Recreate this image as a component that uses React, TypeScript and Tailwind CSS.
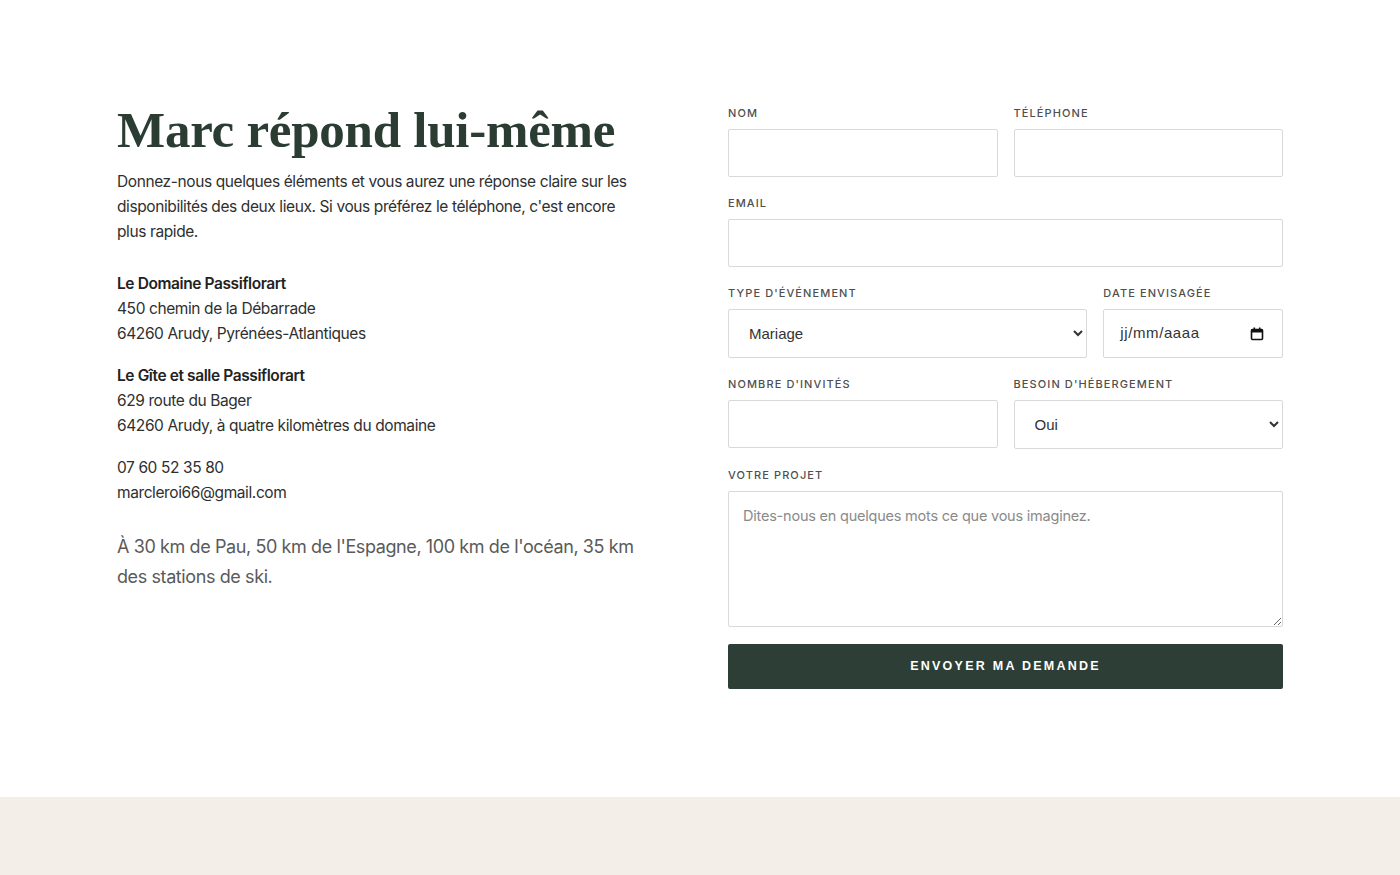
import React from 'react';

const sans = "font-['Inter','Noto_Sans',sans-serif]";
const arial = "font-['Liberation_Sans',Arial,sans-serif]";

const Label: React.FC<{ children: React.ReactNode }> = ({ children }) => (
  <label className="block text-[11px] leading-4 font-medium uppercase tracking-[0.1em] text-[#4f4f4f] mb-2">
    {children}
  </label>
);

const inputCls =
  'block w-full h-12 px-4 bg-white border border-[#d9d9d9] rounded-[2px] text-[15px] text-[#333] outline-none';

const CalendarIcon = () => (
  <svg width="14" height="14" viewBox="0 0 14 14" fill="none">
    <rect x="1.5" y="2.5" width="11" height="10" rx="1" stroke="#111" strokeWidth="1.6" />
    <rect x="1.5" y="2.5" width="11" height="3" fill="#111" />
    <rect x="3.5" y="0.5" width="1.6" height="3" fill="#111" />
    <rect x="8.9" y="0.5" width="1.6" height="3" fill="#111" />
  </svg>
);

const App: React.FC = () => {
  return (
    <div className={`min-h-screen bg-white ${sans}`}>
      <section className="pt-[100px] pb-[108px]">
        <div className="mx-auto w-[1166px] grid grid-cols-[525px_555px] gap-x-[86px]">
          {/* Left column */}
          <div className="tracking-[-0.025em]">
            <h2 className="font-['Liberation_Serif','DejaVu_Serif',serif] font-bold text-[51px] leading-[60px] tracking-[-0.005em] text-[#2b3d33]">
              Marc répond lui-même
            </h2>
            <p className="mt-[9px] text-[15.5px] leading-[25px] text-[#2f2f2f]">
              Donnez-nous quelques éléments et vous aurez une réponse claire sur les disponibilités des deux lieux. Si vous préférez le téléphone, c'est encore plus rapide.
            </p>

            <div className="mt-[27px] text-[15.5px] leading-[25px] text-[#2f2f2f]">
              <p className="font-semibold text-[#222]">Le Domaine Passiflorart</p>
              <p>450 chemin de la Débarrade</p>
              <p>64260 Arudy, Pyrénées-Atlantiques</p>
            </div>

            <div className="mt-[17px] text-[15.5px] leading-[25px] text-[#2f2f2f]">
              <p className="font-semibold text-[#222]">Le Gîte et salle Passiflorart</p>
              <p>629 route du Bager</p>
              <p>64260 Arudy, à quatre kilomètres du domaine</p>
            </div>

            <div className="mt-[17px] text-[15.5px] leading-[25px] text-[#2f2f2f]">
              <p>07 60 52 35 80</p>
              <p>marcleroi66@gmail.com</p>
            </div>

            <p className="mt-[27px] text-[18px] leading-[30px] text-[#5a5a5a]">
              À 30 km de Pau, 50 km de l'Espagne, 100 km de l'océan, 35 km des stations de ski.
            </p>
          </div>

          {/* Form */}
          <form className="pt-[5px]" onSubmit={(e) => e.preventDefault()}>
            <div className="grid grid-cols-2 gap-x-4">
              <div>
                <Label>Nom</Label>
                <input type="text" className={inputCls} />
              </div>
              <div>
                <Label>Téléphone</Label>
                <input type="tel" className={inputCls} />
              </div>
            </div>

            <div className="mt-[18px]">
              <Label>Email</Label>
              <input type="email" className={inputCls} />
            </div>

            <div className="mt-[18px] grid grid-cols-[2fr_1fr] gap-x-4">
              <div>
                <Label>Type d'événement</Label>
                <select className={`${inputCls} h-[49px] ${arial}`} defaultValue="Mariage">
                  <option>Mariage</option>
                  <option>Séminaire</option>
                  <option>Anniversaire</option>
                  <option>Autre</option>
                </select>
              </div>
              <div>
                <Label>Date envisagée</Label>
                <div className={`${inputCls} h-[49px] flex items-center justify-between pr-[18px] ${arial}`}>
                  <span className="tracking-[0.04em]">jj/mm/aaaa</span>
                  <CalendarIcon />
                </div>
              </div>
            </div>

            <div className="mt-[18px] grid grid-cols-2 gap-x-4">
              <div>
                <Label>Nombre d'invités</Label>
                <input type="number" className={inputCls} />
              </div>
              <div>
                <Label>Besoin d'hébergement</Label>
                <select className={`${inputCls} h-[49px] ${arial}`} defaultValue="Oui">
                  <option>Oui</option>
                  <option>Non</option>
                  <option>Je ne sais pas encore</option>
                </select>
              </div>
            </div>

            <div className="mt-[18px]">
              <Label>Votre projet</Label>
              <textarea
                rows={5}
                placeholder="Dites-nous en quelques mots ce que vous imaginez."
                className="block w-full h-[136px] px-[14px] py-[12px] bg-white border border-[#d9d9d9] rounded-[2px] text-[14.5px] leading-6 tracking-[-0.015em] text-[#333] placeholder:text-[#8a8a8a] outline-none"
              />
            </div>

            <button
              type="submit"
              className={`mt-[17px] w-full h-[45px] bg-[#2c3e35] rounded-[2px] text-white text-[12.5px] font-bold uppercase tracking-[0.18em] ${arial}`}
            >
              Envoyer ma demande
            </button>
          </form>
        </div>
      </section>

      <section className="h-[200px] bg-[#f3efe8]" />
    </div>
  );
};

export default App;
